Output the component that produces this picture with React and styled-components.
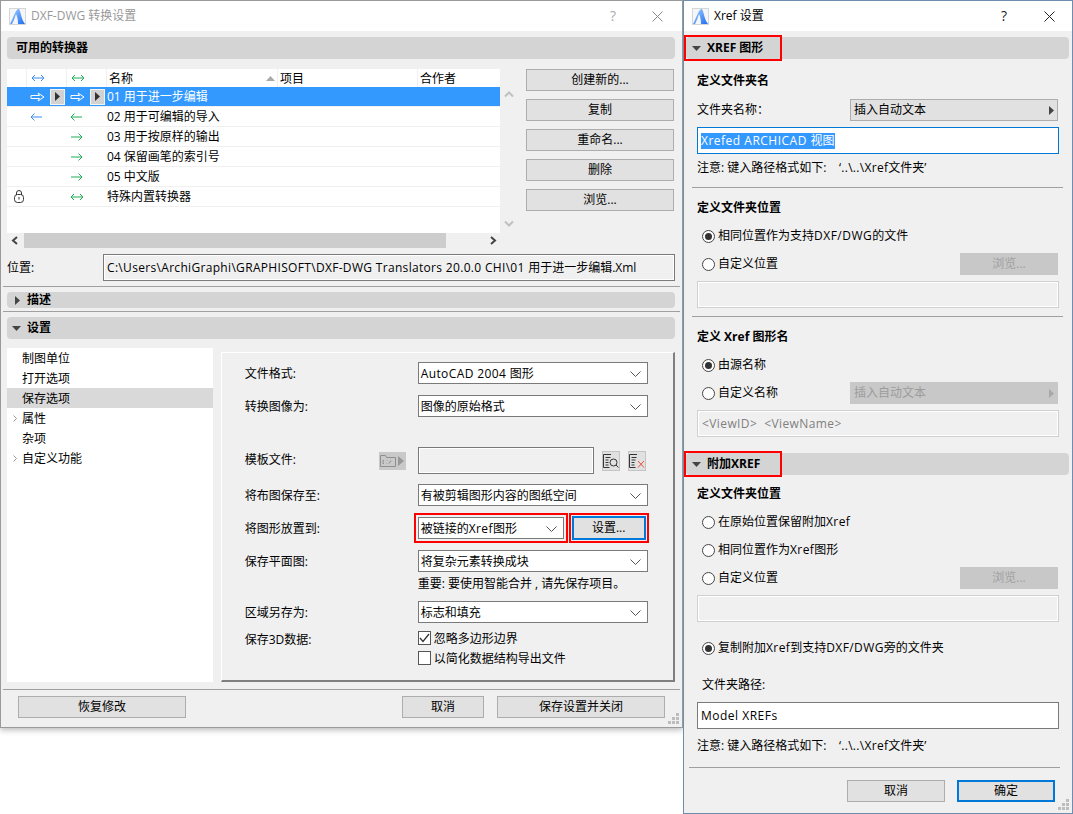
import React from 'react';
import styled, { createGlobalStyle } from 'styled-components';

const GlobalStyle = createGlobalStyle`
  html, body {
    margin: 0;
    background: #fff;
    overflow: hidden;
  }
  body {
    font-family: "Open Sans", "Noto Sans CJK SC", sans-serif;
    font-size: 12px;
    line-height: 16px;
    color: #000;
  }
  * { box-sizing: border-box; }
`;

const Desktop = styled.div`
  display: flex;
  align-items: flex-start;
  width: 1073px;
  height: 814px;
  overflow: hidden;
`;

const Window = styled.div`
  position: relative;
  flex: none;
  width: ${({ $w }) => $w}px;
  height: ${({ $h }) => $h}px;
  background: #f0f0f0;
  border: 1px solid ${({ $active }) => ($active ? '#6f8dae' : '#9a9a9a')};
  box-shadow: ${({ $active }) => ($active ? 'none' : '0 2px 6px rgba(0,0,0,.28)')};
`;

const TitleBar = styled.div`
  display: flex;
  align-items: center;
  height: 30px;
  background: #fff;
  padding: 0 ${({ $right }) => $right}px 0 8px;
  color: ${({ $active }) => ($active ? '#000' : '#999')};
`;

const TitleText = styled.span`
  margin-left: 5px;
  flex: 1;
  white-space: pre;
`;

const HelpMark = styled.span`
  font-size: 14px;
  width: 10px;
  text-align: center;
  color: ${({ $active }) => ($active ? '#222' : '#aaa')};
`;

const CloseMark = styled.svg`
  margin-left: ${({ $gap }) => $gap}px;
`;

const Latin = styled.span`
  letter-spacing: ${({ $ls }) => $ls ?? 0.4}px;
`;

const Pane = styled.div`
  padding: 6px 7px 0 6px;
`;

const SectionHeader = styled.div`
  display: flex;
  align-items: center;
  height: ${({ $h }) => $h || 22}px;
  margin-top: ${({ $mt }) => $mt || 0}px;
  padding-left: ${({ $pl }) => $pl || 0}px;
  background: #d4d4d4;
  border-radius: 4px;
  font-weight: 700;
`;

const Caret = styled.svg`
  flex: none;
  margin-right: ${({ $gap }) => $gap ?? 6}px;
`;

const Converters = styled.div`
  display: flex;
  margin-top: 10px;
`;

const ListColumn = styled.div`
  width: 493px;
`;

const Table = styled.div`
  height: 164px;
  background: #fff;
`;

const TableRow = styled.div`
  display: grid;
  grid-template-columns: 19px 40px 40px 171px 140px 83px;
  height: ${({ $head }) => ($head ? 18 : 20)}px;
  align-items: center;
  background: ${({ $selected }) => ($selected ? '#3399ff' : 'transparent')};
  color: ${({ $selected }) => ($selected ? '#fff' : '#000')};
  border-bottom: ${({ $head }) => ($head ? 'none' : '1px solid #f0f0f0')};
`;

const IconCell = styled.div`
  display: flex;
  align-items: center;
  height: 100%;
  padding-left: ${({ $pl }) => $pl ?? 4}px;
  border-left: ${({ $head }) => ($head ? '1px solid #f0f0f0' : 'none')};
`;

const NameCell = styled.div`
  display: flex;
  align-items: center;
  justify-content: space-between;
  height: 100%;
  white-space: pre;
  padding: ${({ $head }) => ($head ? '1px 2px 0 2px' : '0 0 0 1px')};
  border-left: ${({ $head }) => ($head ? '1px solid #f0f0f0' : 'none')};
`;

const StepButton = styled.span`
  display: flex;
  align-items: center;
  justify-content: center;
  width: 15px;
  height: 16px;
  margin-left: 5px;
  background: #d2d2d2;
  border: 1px solid #f4f4f4;
`;

const HScroll = styled.div`
  display: flex;
  align-items: center;
  justify-content: space-between;
  position: relative;
  height: 15px;
  padding: 0 3px 0 4px;
`;

const HThumb = styled.div`
  position: absolute;
  left: 17px;
  top: 0;
  bottom: 0;
  width: 422px;
  background: #cdcdcd;
`;

const VScroll = styled.div`
  display: flex;
  flex-direction: column;
  justify-content: space-between;
  align-items: center;
  width: 17px;
  height: 164px;
  padding: 22px 0 6px;
`;

const ButtonColumn = styled.div`
  display: flex;
  flex-direction: column;
  gap: 8px;
  width: 148px;
  margin-left: 9px;
`;

const Button = styled.div`
  display: flex;
  align-items: center;
  justify-content: center;
  flex: none;
  width: ${({ $w }) => ($w ? `${$w}px` : 'auto')};
  height: ${({ $h }) => $h || 22}px;
  margin-left: ${({ $ml }) => $ml || 0}px;
  background: ${({ $off }) => ($off ? '#c8c8c8' : '#e1e1e1')};
  color: ${({ $off }) => ($off ? '#a0a0a0' : '#000')};
  border: ${({ $focus, $off }) =>
    $focus ? '2px solid #0078d7' : `1px solid ${$off ? '#c8c8c8' : '#adadad'}`};
  outline: ${({ $marked }) => ($marked ? '2px solid #f00' : 'none')};
  outline-offset: 1px;
  white-space: pre;
`;

const PathRow = styled.div`
  display: flex;
  align-items: center;
  margin-top: 6px;
  height: 27px;
`;

const PathLabel = styled.span`
  width: 96px;
`;

const PathField = styled.div`
  display: flex;
  align-items: center;
  width: 572px;
  height: 27px;
  padding-left: 3px;
  border: 1px solid #7a7a7a;
  box-shadow: inset 0 0 0 1px #fff;
  white-space: pre;
`;

const Separator = styled.div`
  height: 1px;
  background: #a0a0a0;
  margin: ${({ $mt }) => $mt}px ${({ $mr }) => $mr}px 0 ${({ $ml }) => $ml}px;
`;

const Settings = styled.div`
  display: flex;
  margin-top: 9px;
  height: 334px;
`;

const TreeList = styled.div`
  width: 206px;
  background: #fff;
`;

const TreeItem = styled.div`
  display: flex;
  align-items: center;
  height: 20px;
  padding: 1px 0 0 ${({ $leaf }) => ($leaf ? 15 : 6)}px;
  background: ${({ $selected }) => ($selected ? '#d9d9d9' : 'transparent')};
`;

const TreeChevron = styled.svg`
  margin-right: 4px;
`;

const FormPanel = styled.div`
  width: 455px;
  height: 330px;
  margin: 4px 0 0 8px;
  padding: 9px 0 0 23px;
  border-top: 1px solid #fff;
  border-left: 1px solid #fff;
  border-right: 2px solid #7f7f7f;
  border-bottom: 2px solid #7f7f7f;
`;

const FormRow = styled.div`
  display: flex;
  align-items: ${({ $top }) => ($top ? 'flex-start' : 'center')};
  height: ${({ $h }) => $h || 22}px;
  margin-top: ${({ $mt }) => $mt || 0}px;
`;

const FormLabel = styled.span`
  display: flex;
  align-items: center;
  justify-content: space-between;
  flex: none;
  width: 173px;
  padding: ${({ $pad }) => ($pad ? '0 12px 0 0' : '1px 0 0 0')};
`;

const TemplateCaption = styled.span`
  margin-top: -2px;
`;

const Select = styled.div`
  display: flex;
  align-items: center;
  justify-content: space-between;
  flex: none;
  width: ${({ $w }) => $w || 230}px;
  height: 22px;
  padding: 1px 6px 0 2px;
  background: #fff;
  border: 1px solid #7a7a7a;
  outline: ${({ $marked }) => ($marked ? '2px solid #f00' : 'none')};
  outline-offset: 2px;
  white-space: pre;
`;

const SquareButton = styled.div`
  display: flex;
  align-items: center;
  justify-content: center;
  width: 18px;
  height: 20px;
  margin-left: ${({ $ml }) => $ml}px;
  background: #e1e1e1;
  border: 1px solid #c4c4c4;
`;

const FolderButton = styled.div`
  display: flex;
  align-items: center;
  justify-content: center;
  gap: 2px;
  width: 27px;
  height: 18px;
  background: #c9c9c9;
`;

const TemplateField = styled.div`
  width: 176px;
  height: 27px;
  border: 1px solid #7a7a7a;
  box-shadow: inset 0 0 0 1px #fff;
`;

const FormNote = styled.div`
  margin: 4px 0 0 173px;
  height: 14px;
  line-height: 15px;
`;

const CheckRow = styled.label`
  display: flex;
  align-items: center;
  gap: 3px;
  height: 14px;
  line-height: 16px;
`;

const CheckText = styled.span`
  padding-top: 1px;
`;

const CheckBox = styled.span`
  display: flex;
  align-items: center;
  justify-content: center;
  width: 13px;
  height: 14px;
  background: #fff;
  border: 1px solid #555;
`;

const CheckStack = styled.div`
  display: flex;
  flex-direction: column;
  gap: 6px;
`;

const Footer = styled.div`
  display: flex;
  align-items: center;
  margin-top: ${({ $mt }) => $mt}px;
  padding-left: ${({ $pl }) => $pl}px;
`;

const Grip = styled.svg`
  position: absolute;
  right: 2px;
  bottom: 2px;
`;

const XrefPane = styled.div`
  padding: 0 13px;
`;

const XrefHeader = styled(SectionHeader)`
  margin: ${({ $mt }) => $mt}px -10px 0 -11px;
`;

const Marked = styled.div`
  display: flex;
  align-items: center;
  width: 94px;
  height: 22px;
  padding-left: 6px;
  outline: 2px solid #f00;
`;

const BoldLabel = styled.div`
  height: 16px;
  margin-top: ${({ $mt }) => $mt}px;
  font-weight: 700;
`;

const XrefRow = styled.div`
  display: flex;
  align-items: center;
  justify-content: space-between;
  height: 22px;
  margin-top: ${({ $mt }) => $mt}px;
  padding-left: ${({ $pl }) => $pl || 0}px;
  padding-right: 1px;
`;

const RadioLabel = styled.span`
  display: flex;
  align-items: center;
  gap: 3px;
  white-space: pre;
`;

const RadioDot = styled.span`
  display: flex;
  align-items: center;
  justify-content: center;
  width: 13px;
  height: 13px;
  border-radius: 50%;
  background: #fff;
  border: 1px solid #444;

  &::after {
    content: '';
    display: ${({ $on }) => ($on ? 'block' : 'none')};
    width: 7px;
    height: 7px;
    border-radius: 50%;
    background: #333;
  }
`;

const AutoText = styled.div`
  display: flex;
  align-items: center;
  justify-content: space-between;
  width: 208px;
  height: 22px;
  padding: 0 3px 0 3px;
  background: ${({ $off }) => ($off ? '#c8c8c8' : '#e1e1e1')};
  color: ${({ $off }) => ($off ? '#9c9c9c' : '#000')};
  border: 1px solid ${({ $off }) => ($off ? '#c8c8c8' : '#adadad')};
`;

const TextInput = styled.div`
  display: flex;
  align-items: center;
  height: 27px;
  margin-top: ${({ $mt }) => $mt || 6}px;
  padding-left: ${({ $pl }) => $pl || 3}px;
  white-space: pre;
  background: ${({ $off }) => ($off ? '#f0f0f0' : '#fff')};
  color: ${({ $off }) => ($off ? '#808080' : '#000')};
  border: 1px solid ${({ $focus, $off }) => ($focus ? '#0078d7' : $off ? '#d0d0d0' : '#7a7a7a')};
  box-shadow: ${({ $off }) => ($off ? 'inset 0 0 0 1px #fff' : 'none')};
`;

const Selection = styled.span`
  background: #3399ff;
  color: #fff;
`;

const Note = styled.div`
  height: 16px;
  margin-top: ${({ $mt }) => $mt}px;
  padding-left: ${({ $pl }) => $pl || 0}px;
  white-space: pre;
`;

const ARROWS = {
  both: 'M1 5h12M4 2 1 5l3 3M10 2l3 3-3 3',
  left: 'M1 5h11M4.500 1.500 1 5l3.500 3.500',
  right: 'M1 5h11M8.500 1.500 12 5l-3.500 3.500',
};

const Arrow = ({ kind, color }) => (
  <svg width="14" height="10" viewBox="0 0 14 10" fill="none" stroke={color}>
    <path d={ARROWS[kind]} />
  </svg>
);

const HollowArrow = ({ color }) => (
  <svg width="15" height="10" viewBox="0 0 15 10" fill="none" stroke={color}>
    <path d="M1 3.500h8.500L8 1l6 4-6 4 1.500-2.500H1z" />
  </svg>
);

const Logo = () => (
  <svg width="17" height="17" viewBox="0 0 17 17">
    <defs>
      <linearGradient id="sail" x1="0" x2="1" y1="0" y2="1">
        <stop offset="0" stopColor="#a9d0ff" />
        <stop offset="1" stopColor="#1a6cf0" />
      </linearGradient>
    </defs>
    <rect x=".5" y=".5" width="16" height="16" fill="#f4f6fa" stroke="#d6d6d6" />
    <path d="M1 16C4 11 6 3 9 1h1c2 3 2 10 6 15H9C9 11 8 8 7 6 6 9 5 12 3 16z" fill="url(#sail)" />
  </svg>
);

const Close = ({ gap, color }) => (
  <CloseMark $gap={gap} width="11" height="11" viewBox="0 0 11 11" stroke={color} fill="none">
    <path d="M.5.500l10 10M10.500.500l-10 10" />
  </CloseMark>
);

const Lock = () => (
  <svg width="10" height="13" viewBox="0 0 10 13" fill="none" stroke="#333">
    <path d="M2.500 5V3a2.500 2.500 0 0 1 5 0v2" />
    <rect x=".5" y="4.500" width="9" height="8" rx="3" />
    <path d="M5 7v2.500" />
  </svg>
);

const TriRight = ({ color = '#444', w = 5, h = 9 }) => (
  <svg width={w} height={h} viewBox="0 0 6 10" preserveAspectRatio="none">
    <path d="M0 0l6 5-6 5z" fill={color} />
  </svg>
);

const TriDown = () => (
  <Caret width="9" height="5" viewBox="0 0 9 5">
    <path d="M0 0h9L4.500 5z" fill="#444" />
  </Caret>
);

const Chevron = () => (
  <svg width="11" height="6" viewBox="0 0 11 6" fill="none" stroke="#555">
    <path d="M.5.500l5 5 5-5" />
  </svg>
);

const ScrollMark = ({ d, w = 8, h = 9, color = '#444', sw = 2 }) => (
  <svg width={w} height={h} viewBox={`0 0 ${w} ${h}`} fill="none" stroke={color} strokeWidth={sw}>
    <path d={d} />
  </svg>
);

const SmallChevron = () => (
  <TreeChevron width="5" height="7" viewBox="0 0 5 7" fill="none" stroke="#999">
    <path d="M.5.500l3 3-3 3" />
  </TreeChevron>
);

const GripDots = () => (
  <Grip width="12" height="12" viewBox="0 0 12 12" fill="#bdbdbd">
    <path d="M8 0h3v3H8zM4 4h3v3H4zM8 4h3v3H8zM0 8h3v3H0zM4 8h3v3H4zM8 8h3v3H8z" />
  </Grip>
);

const FolderIcon = () => (
  <>
    <svg width="16" height="13" viewBox="0 0 16 13" fill="none" stroke="#8f8f8f">
      <path d="M.5 12.500V1.500h5l1 2h9v9z" />
      <path d="M4 6.500H3v3h1M7 6.500v.5M7 9v.5M9 9.500l2-3" />
    </svg>
    <TriRight color="#989898" w={6} h={10} />
  </>
);

const DocSearch = () => (
  <svg width="16" height="14" viewBox="0 0 16 14" fill="none" stroke="#333">
    <path d="M8 .5H.5v13h6M2.500 3.500h5M2.500 6h3M2.500 8.500h3M2.500 11h3" />
    <circle cx="10.500" cy="8.500" r="3.500" />
    <path d="M13 11l2.500 2.500" />
  </svg>
);

const DocDelete = () => (
  <svg width="16" height="14" viewBox="0 0 16 14" fill="none" stroke="#333">
    <path d="M8 .5H.5v13h6M2.500 3.500h5M2.500 6h4M2.500 8.500h3M2.500 11h3" />
    <path d="M9 7l6 6.500M15 7l-6 6.500" stroke="#e8503a" />
  </svg>
);

const ROWS = [
  { name: '02 用于可编辑的导入', blue: 'left', green: 'left' },
  { name: '03 用于按原样的输出', green: 'right' },
  { name: '04 保留画笔的索引号', green: 'right' },
  { name: '05 中文版', green: 'right' },
  { name: '特殊内置转换器', green: 'both', locked: true },
];

const TREE = [
  { label: '制图单位' },
  { label: '打开选项' },
  { label: '保存选项', selected: true },
  { label: '属性', branch: true },
  { label: '杂项' },
  { label: '自定义功能', branch: true },
];

const PATH_NOTE = <>注意: 键入路径格式如下:    <Latin $ls={0.3}>‘..\..\Xref</Latin>文件夹’</>;

const ConverterTable = () => (
  <Table>
    <TableRow $head>
      <IconCell $pl={0} />
      <IconCell $head><Arrow kind="both" color="#3d8bf0" /></IconCell>
      <IconCell $head><Arrow kind="both" color="#1fae55" /></IconCell>
      <NameCell $head>
        名称
        <svg width="9" height="5" viewBox="0 0 9 5"><path d="M4.500 0L9 5H0z" fill="#aaa" /></svg>
      </NameCell>
      <NameCell $head>项目</NameCell>
      <NameCell $head>合作者</NameCell>
    </TableRow>
    <TableRow $selected>
      <IconCell $pl={0} />
      <IconCell>
        <HollowArrow color="#fff" />
        <StepButton><TriRight color="#333" /></StepButton>
      </IconCell>
      <IconCell>
        <HollowArrow color="#fff" />
        <StepButton><TriRight color="#333" /></StepButton>
      </IconCell>
      <NameCell>01 用于进一步编辑</NameCell>
      <span />
      <span />
    </TableRow>
    {ROWS.map((row) => (
      <TableRow key={row.name}>
        <IconCell $pl={7}>{row.locked && <Lock />}</IconCell>
        <IconCell>{row.blue && <Arrow kind={row.blue} color="#3d8bf0" />}</IconCell>
        <IconCell>{row.green && <Arrow kind={row.green} color="#1fae55" />}</IconCell>
        <NameCell>{row.name}</NameCell>
        <span />
        <span />
      </TableRow>
    ))}
  </Table>
);

const ConverterWindow = () => (
  <Window $w={683} $h={728}>
    <TitleBar $right={19}>
      <Logo />
      <TitleText>DXF-DWG 转换设置</TitleText>
      <HelpMark>?</HelpMark>
      <Close gap={34} color="#888" />
    </TitleBar>
    <Pane>
      <SectionHeader $pl={9}>可用的转换器</SectionHeader>
      <Converters>
        <ListColumn>
          <ConverterTable />
          <HScroll>
            <HThumb />
            <ScrollMark d="M6 1L2 4.500 6 8" />
            <ScrollMark d="M2 1l4 3.500L2 8" />
          </HScroll>
        </ListColumn>
        <VScroll>
          <ScrollMark d="M1 5.500l4-4 4 4" w={10} h={7} color="#c0c0c0" />
          <ScrollMark d="M1 1.500l4 4 4-4" w={10} h={7} color="#c0c0c0" />
        </VScroll>
        <ButtonColumn>
          <Button>创建新的...</Button>
          <Button>复制</Button>
          <Button>重命名...</Button>
          <Button>删除</Button>
          <Button>浏览...</Button>
        </ButtonColumn>
      </Converters>
      <PathRow>
        <PathLabel>位置:</PathLabel>
        <PathField>
          <Latin $ls={0.32}>C:\Users\ArchiGraphi\GRAPHISOFT\DXF-DWG Translators 20.0.0 CHI\01 </Latin>
          用于进一步编辑.Xml
        </PathField>
      </PathRow>
      <Separator $mt={5} $ml={-4} $mr={-5} />
      <SectionHeader $h={16} $mt={5} $pl={8}>
        <Caret $gap={7} width="5" height="9" viewBox="0 0 5 9">
          <path d="M0 0l5 4.500L0 9z" fill="#444" />
        </Caret>
        描述
      </SectionHeader>
      <Separator $mt={3} $ml={-4} $mr={-5} />
      <SectionHeader $mt={5} $pl={5}>
        <TriDown />
        设置
      </SectionHeader>
      <Settings>
        <TreeList>
          {TREE.map((item) => (
            <TreeItem key={item.label} $leaf={!item.branch} $selected={item.selected}>
              {item.branch && <SmallChevron />}
              {item.label}
            </TreeItem>
          ))}
        </TreeList>
        <FormPanel>
          <FormRow>
            <FormLabel>文件格式:</FormLabel>
            <Select><span><Latin>AutoCAD 2004 </Latin>图形</span><Chevron /></Select>
          </FormRow>
          <FormRow $mt={11}>
            <FormLabel>转换图像为:</FormLabel>
            <Select>图像的原始格式<Chevron /></Select>
          </FormRow>
          <FormRow $mt={30} $h={27}>
            <FormLabel $pad>
              <TemplateCaption>模板文件:</TemplateCaption>
              <FolderButton><FolderIcon /></FolderButton>
            </FormLabel>
            <TemplateField />
            <SquareButton $ml={8}><DocSearch /></SquareButton>
            <SquareButton $ml={8}><DocDelete /></SquareButton>
          </FormRow>
          <FormRow $mt={10}>
            <FormLabel>将布图保存至:</FormLabel>
            <Select>有被剪辑图形内容的图纸空间<Chevron /></Select>
          </FormRow>
          <FormRow $mt={11}>
            <FormLabel>将图形放置到:</FormLabel>
            <Select $w={146} $marked><span>被链接的<Latin>Xref</Latin>图形</span><Chevron /></Select>
            <Button $w={74} $h={24} $ml={8} $focus $marked>设置...</Button>
          </FormRow>
          <FormRow $mt={11}>
            <FormLabel>保存平面图:</FormLabel>
            <Select>将复杂元素转换成块<Chevron /></Select>
          </FormRow>
          <FormNote>重要: 要使用智能合并 ,  请先保存项目。</FormNote>
          <FormRow $mt={11}>
            <FormLabel>区域另存为:</FormLabel>
            <Select>标志和填充<Chevron /></Select>
          </FormRow>
          <FormRow $mt={8} $h={34} $top>
            <FormLabel>保存3D数据:</FormLabel>
            <CheckStack>
              <CheckRow>
                <CheckBox>
                  <svg width="11" height="10" viewBox="0 0 11 10" fill="none" stroke="#333" strokeWidth="1.300">
                    <path d="M1 5l3 3.500L10 1" />
                  </svg>
                </CheckBox>
                <CheckText>忽略多边形边界</CheckText>
              </CheckRow>
              <CheckRow><CheckBox /><CheckText>以简化数据结构导出文件</CheckText></CheckRow>
            </CheckStack>
          </FormRow>
        </FormPanel>
      </Settings>
      <Separator $mt={7} $ml={-4} $mr={-5} />
    </Pane>
    <Footer $mt={6} $pl={17}>
      <Button $w={168}>恢复修改</Button>
      <Button $w={82} $ml={216}>取消</Button>
      <Button $w={168} $ml={13}>保存设置并关闭</Button>
    </Footer>
    <GripDots />
  </Window>
);

const XrefWindow = () => (
  <Window $w={390} $h={814} $active>
    <TitleBar $right={17} $active>
      <Logo />
      <TitleText>Xref 设置</TitleText>
      <HelpMark $active>?</HelpMark>
      <Close gap={35} color="#222" />
    </TitleBar>
    <XrefPane>
      <XrefHeader $mt={6}>
        <Marked><TriDown />XREF 图形</Marked>
      </XrefHeader>
      <BoldLabel $mt={14}>定义文件夹名</BoldLabel>
      <XrefRow $mt={10}>
        文件夹名称：
        <AutoText>插入自动文本<TriRight /></AutoText>
      </XrefRow>
      <TextInput $focus><Selection><Latin $ls={0.5}>Xrefed ARCHICAD </Latin>视图</Selection></TextInput>
      <Note $mt={6}>{PATH_NOTE}</Note>
      <Separator $mt={11} $ml={-5} $mr={-4} />
      <BoldLabel $mt={12}>定义文件夹位置</BoldLabel>
      <XrefRow $mt={9} $pl={5}>
        <RadioLabel><RadioDot $on /><span>相同位置作为支持<Latin $ls={0.5}>DXF/DWG</Latin>的文件</span></RadioLabel>
      </XrefRow>
      <XrefRow $mt={6} $pl={5}>
        <RadioLabel><RadioDot />自定义位置</RadioLabel>
        <Button $w={98} $off>浏览...</Button>
      </XrefRow>
      <TextInput $off />
      <Separator $mt={8} $ml={-5} $mr={-4} />
      <BoldLabel $mt={12}>定义 Xref 图形名</BoldLabel>
      <XrefRow $mt={9} $pl={5}>
        <RadioLabel><RadioDot $on />由源名称</RadioLabel>
      </XrefRow>
      <XrefRow $mt={6} $pl={5}>
        <RadioLabel><RadioDot />自定义名称</RadioLabel>
        <AutoText $off>插入自动文本<TriRight color="#a8a8a8" /></AutoText>
      </XrefRow>
      <TextInput $off $pl={4}><Latin>{'<ViewID>  <ViewName>'}</Latin></TextInput>
      <XrefHeader $mt={16}>
        <Marked><TriDown />附加XREF</Marked>
      </XrefHeader>
      <BoldLabel $mt={11}>定义文件夹位置</BoldLabel>
      <XrefRow $mt={9} $pl={5}>
        <RadioLabel><RadioDot /><span>在原始位置保留附加<Latin>Xref</Latin></span></RadioLabel>
      </XrefRow>
      <XrefRow $mt={6} $pl={5}>
        <RadioLabel><RadioDot /><span>相同位置作为<Latin>Xref</Latin>图形</span></RadioLabel>
      </XrefRow>
      <XrefRow $mt={6} $pl={5}>
        <RadioLabel><RadioDot />自定义位置</RadioLabel>
        <Button $w={98} $off>浏览...</Button>
      </XrefRow>
      <TextInput $off />
      <XrefRow $mt={15} $pl={5}>
        <RadioLabel><RadioDot $on /><span>复制附加<Latin>Xref</Latin>到支持<Latin>DXF/DWG</Latin>旁的文件夹</span></RadioLabel>
      </XrefRow>
      <Note $mt={18} $pl={5}>文件夹路径:</Note>
      <TextInput $mt={9}><Latin $ls={0.5}>Model XREFs</Latin></TextInput>
      <Note $mt={9}>{PATH_NOTE}</Note>
      <Separator $mt={13} $ml={-8} $mr={-1} />
    </XrefPane>
    <Footer $mt={12} $pl={163}>
      <Button $w={98}>取消</Button>
      <Button $w={98} $ml={12} $focus>确定</Button>
    </Footer>
    <GripDots />
  </Window>
);

export default function App() {
  return (
    <>
      <GlobalStyle />
      <Desktop>
        <ConverterWindow />
        <XrefWindow />
      </Desktop>
    </>
  );
}
